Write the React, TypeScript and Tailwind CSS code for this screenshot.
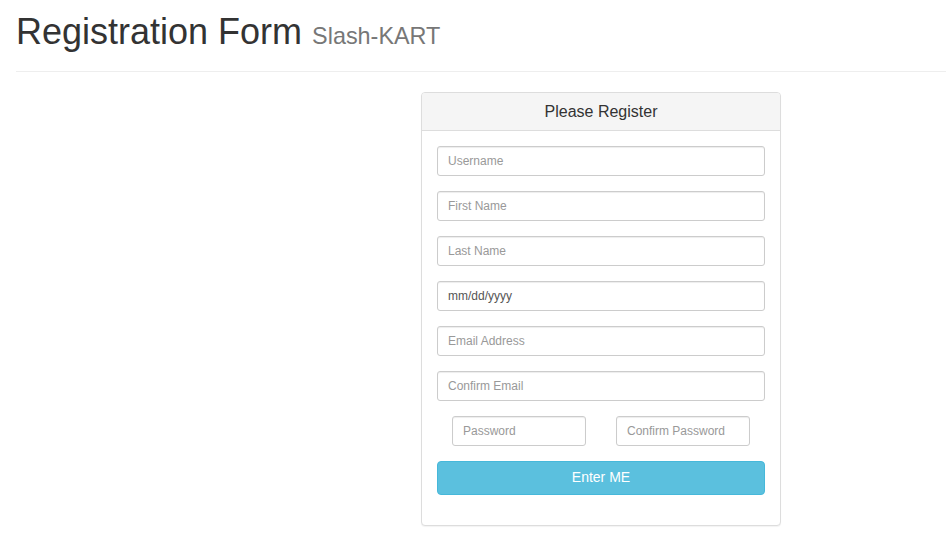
export default function App() {
    const inputClass =
        "block w-full h-[30px] rounded-[3px] border border-[#ccc] bg-white px-[10px] text-[12px] text-[#555] placeholder:text-[#999] shadow-[inset_0_1px_1px_rgba(0,0,0,0.075)] outline-none";

    return (
        <div className="min-h-[536px] bg-white font-['Liberation_Sans',Arial,sans-serif] text-[#333]">
            {/* Page header */}
            <div className="ml-[16px] mb-[20px] border-b border-[#eee] pb-[9px] pt-[12px]">
                <h1 className="mb-[10px] text-[36px] leading-[1.1] font-normal">
                    Registration Form <small className="text-[23.4px] text-[#777]">Slash-KART</small>
                </h1>
            </div>

            {/* Register panel */}
            <div className="ml-[421px] w-[360px] rounded-[4px] border border-[#ddd] bg-white shadow-[0_1px_1px_rgba(0,0,0,0.05)]">
                <div className="rounded-t-[3px] border-b border-[#ddd] bg-[#f5f5f5] px-[15px] py-[10px] text-center">
                    <h3 className="text-[16px] leading-[17px]">Please Register</h3>
                </div>
                <form className="flex flex-col px-[15px] pt-[15px] pb-[15px]">
                    <input className={inputClass + " mb-[15px]"} placeholder="Username" />
                    <input className={inputClass + " mb-[15px]"} placeholder="First Name" />
                    <input className={inputClass + " mb-[15px]"} placeholder="Last Name" />
                    <input className={inputClass + " mb-[15px]"} defaultValue="mm/dd/yyyy" />
                    <input className={inputClass + " mb-[15px]"} placeholder="Email Address" />
                    <input className={inputClass + " mb-[15px]"} placeholder="Confirm Email" />
                    <div className="mb-[15px] grid grid-cols-2">
                        <div className="px-[15px]">
                            <input className={inputClass} placeholder="Password" type="password" />
                        </div>
                        <div className="px-[15px]">
                            <input className={inputClass} placeholder="Confirm Password" type="password" />
                        </div>
                    </div>
                    <button
                        type="button"
                        className="mb-[15px] h-[34px] w-full rounded-[4px] border border-[#46b8da] bg-[#5bc0de] text-[14px] text-white"
                    >
                        Enter ME
                    </button>
                </form>
            </div>
        </div>
    );
}
